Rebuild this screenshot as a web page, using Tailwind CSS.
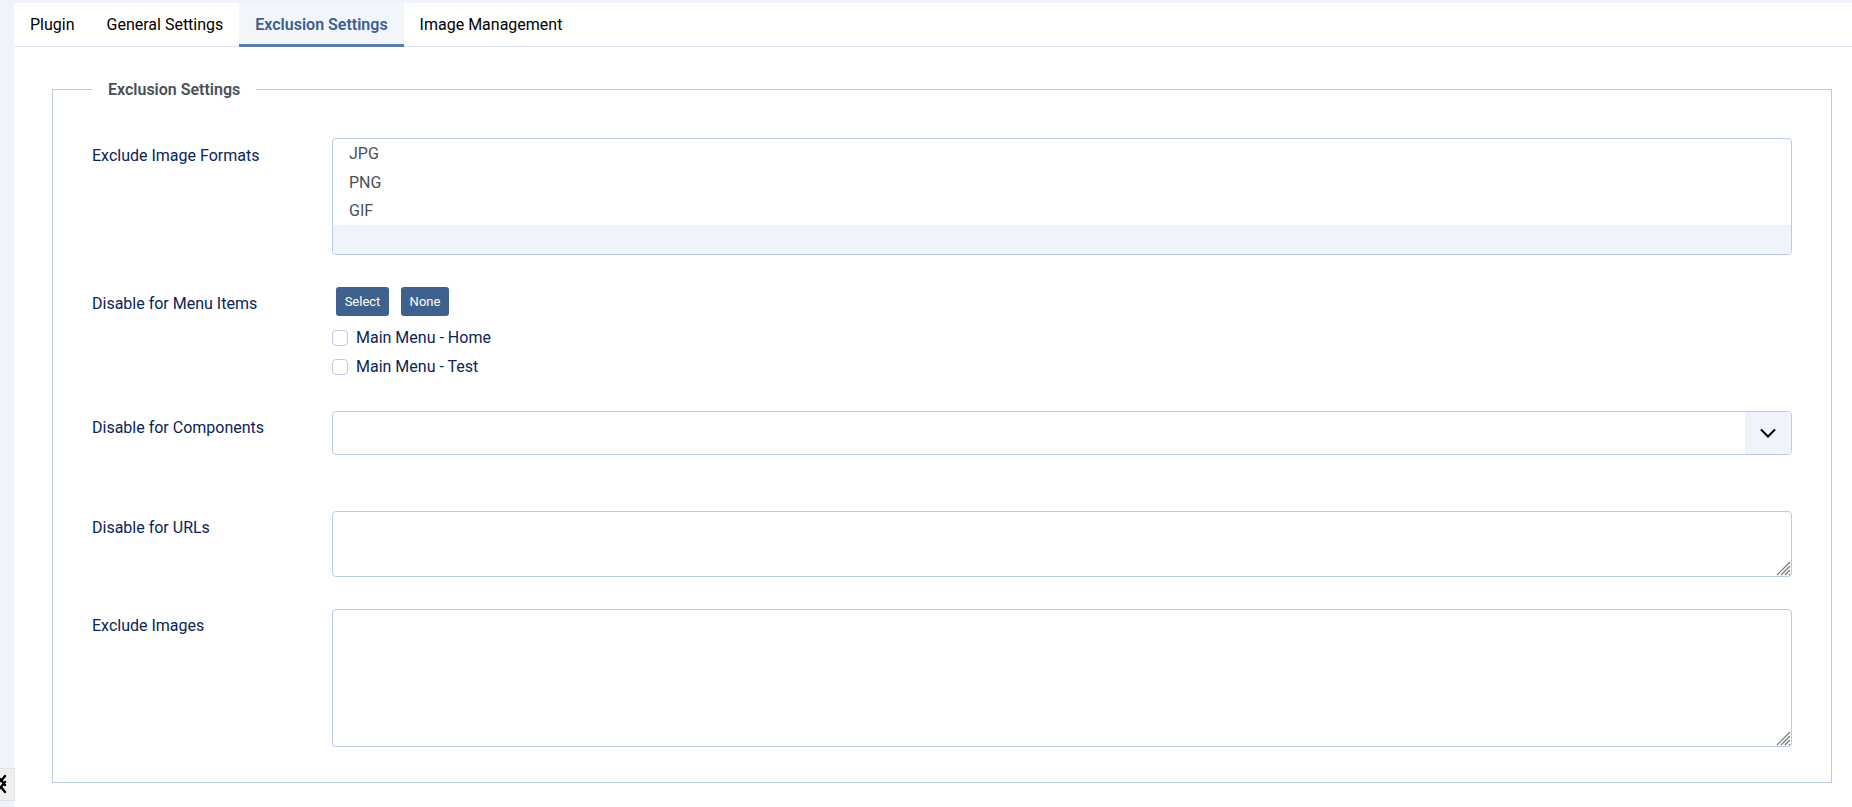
<!DOCTYPE html>
<html lang="en">
<head>
  <meta charset="UTF-8" />
  <title>Exclusion Settings</title>
  <script src="https://cdn.jsdelivr.net/npm/@tailwindcss/browser@4"></script>
</head>
<body class="h-screen overflow-hidden bg-[#eff4fc] font-['Roboto',sans-serif] text-[16px] relative">
  <div class="ml-[14px] mt-[3px] h-[804px] bg-white">
    <!-- tabs -->
    <div class="flex h-[44px] border-b border-[#dfe5f0]">
      <a class="px-[16px] pt-[10px] text-[#000]">Plugin</a>
      <a class="px-[16px] pt-[10px] text-[#000]">General Settings</a>
      <a class="pl-[16px] pr-[16px] pt-[10px] font-semibold text-[#3c5f8e] bg-[#f2f5f9] border-b-[3px] border-[#5b7cab] h-[44px]">Exclusion Settings</a>
      <a class="px-[16px] pt-[10px] text-[#000]">Image Management</a>
    </div>

    <fieldset class="ml-[38px] mr-[20px] mt-[30px] h-[706px] border border-[#b9cae2] pl-[39px] pr-[39px]">
      <legend class="ml-0 px-[16px] pt-[1px] font-semibold text-[#495057] leading-[23px]">Exclusion Settings</legend>

      <div class="flex mt-[37px]">
        <label class="w-[240px] pt-[6px] text-[#0a2455]">Exclude Image Formats</label>
        <div class="flex-1 h-[117px] border border-[#b9cae2] rounded-[4px] overflow-hidden text-[#495057]">
          <div class="h-[28.7px] pl-[16px] leading-[30px]">JPG</div>
          <div class="h-[28.7px] pl-[16px] leading-[30px]">PNG</div>
          <div class="h-[28.7px] pl-[16px] leading-[30px]">GIF</div>
          <div class="h-[30px] bg-[#eff4fc]"></div>
        </div>
      </div>

      <div class="flex mt-[32px]">
        <label class="w-[240px] pt-[5px] text-[#0a2455]">Disable for Menu Items</label>
        <div class="flex-1">
          <div class="flex gap-[12px] pl-[4px]">
            <button class="h-[29px] w-[53px] bg-[#3f618d] text-white text-[13px] rounded-[3px]">Select</button>
            <button class="h-[29px] w-[48px] bg-[#3f618d] text-white text-[13px] rounded-[3px]">None</button>
          </div>
          <div class="flex items-center gap-[8px] h-[29px] mt-[7px] text-[#0a2455]">
            <input type="checkbox" class="appearance-none w-[16px] h-[16px] border border-[#b9cae2] rounded-[4px] bg-white" />
            <span>Main Menu - Home</span>
          </div>
          <div class="flex items-center gap-[8px] h-[29px] text-[#0a2455]">
            <input type="checkbox" class="appearance-none w-[16px] h-[16px] border border-[#b9cae2] rounded-[4px] bg-white" />
            <span>Main Menu - Test</span>
          </div>
        </div>
      </div>

      <div class="flex mt-[30px]">
        <label class="w-[240px] pt-[5px] text-[#0a2455]">Disable for Components</label>
        <div class="flex-1 h-[44px] flex justify-end border border-[#b9cae2] rounded-[4px] overflow-hidden">
          <div class="w-[46px] bg-[#eff4fc] flex items-center justify-center">
            <svg class="mr-[1px]" width="16" height="16" viewBox="0 0 16 16" fill="none" stroke="#000" stroke-width="2"><path d="M1 4.5l7 7 7-7" /></svg>
          </div>
        </div>
      </div>

      <div class="flex mt-[56px]">
        <label class="w-[240px] pt-[5px] text-[#0a2455]">Disable for URLs</label>
        <div class="flex-1 h-[66px] relative">
          <textarea class="block w-full h-full resize-none border border-[#b9cae2] rounded-[4px]"></textarea>
          <svg class="absolute right-[1px] bottom-[1px]" width="15" height="15" viewBox="0 0 15 15" stroke="#777" stroke-width="1.2"><path d="M1 14L14 1M5 14l9-9M9 14l5-5M13 14l1-1" /></svg>
        </div>
      </div>

      <div class="flex mt-[32px]">
        <label class="w-[240px] pt-[5px] text-[#0a2455]">Exclude Images</label>
        <div class="flex-1 h-[138px] relative">
          <textarea class="block w-full h-full resize-none border border-[#b9cae2] rounded-[4px]"></textarea>
          <svg class="absolute right-[1px] bottom-[1px]" width="15" height="15" viewBox="0 0 15 15" stroke="#777" stroke-width="1.2"><path d="M1 14L14 1M5 14l9-9M9 14l5-5M13 14l1-1" /></svg>
        </div>
      </div>
    </fieldset>
  </div>

  <!-- joomla badge, clipped by the window edge -->
  <div class="absolute left-0 top-[768px] w-[15px] h-[33px] bg-[#efefef] border-r border-y border-[#e2e2e2] overflow-hidden">
    <svg class="absolute left-0 top-[4px]" width="8" height="22" viewBox="0 0 8 22" fill="none" stroke="#000" stroke-width="2.4" stroke-linecap="round"><path d="M0 6l5 6M5 3L1 8M0 15l5-6M5 19l-4-5" /></svg>
  </div>
</body>
</html>
